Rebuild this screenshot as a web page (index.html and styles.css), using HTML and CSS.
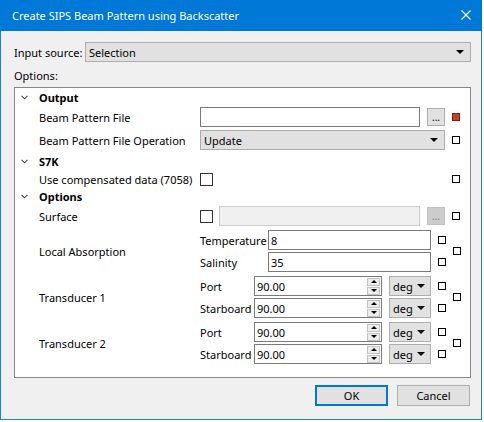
FILE: index.html
```html
<!DOCTYPE html>
<html lang="en">

<head>
    <meta charset="UTF-8">
    <title>Create SIPS Beam Pattern using Backscatter</title>
    <link rel="stylesheet" href="styles.css">
</head>

<body>
    <div class="window">
        <div class="titlebar">
            <span class="title">Create SIPS Beam Pattern using Backscatter</span>
            <svg class="close" width="10" height="10" viewBox="0 0 10 10">
                <path d="M0.5 0.5 L9.5 9.5 M9.5 0.5 L0.5 9.5" stroke="#fff" stroke-width="1.1" fill="none" />
            </svg>
        </div>
        <div class="content">
            <div class="source">
                <span class="source-label">Input source:</span>
                <div class="combo source-combo"><span>Selection</span><i class="arrow"></i></div>
            </div>
            <div class="options-label">Options:</div>

            <div class="tree">
                <div class="section">
                    <svg class="chevron" width="7" height="5" viewBox="0 0 7 5">
                        <path d="M0.5 0.8 L3.5 3.8 L6.5 0.8" stroke="#444" stroke-width="1.1" fill="none" />
                    </svg>
                    <span>Output</span>
                </div>
                <div class="row h22">
                    <div class="label">Beam Pattern File</div>
                    <div class="cell">
                        <div class="edit grow"></div>
                        <div class="browse">...</div>
                    </div>
                    <i class="mark error"></i>
                </div>
                <div class="row h24">
                    <div class="label">Beam Pattern File Operation</div>
                    <div class="cell">
                        <div class="combo grow"><span>Update</span><i class="arrow"></i></div>
                    </div>
                    <i class="mark"></i>
                </div>

                <div class="section">
                    <svg class="chevron" width="7" height="5" viewBox="0 0 7 5">
                        <path d="M0.5 0.8 L3.5 3.8 L6.5 0.8" stroke="#444" stroke-width="1.1" fill="none" />
                    </svg>
                    <span>S7K</span>
                </div>
                <div class="row h18">
                    <div class="label">Use compensated data (7058)</div>
                    <div class="cell">
                        <i class="check"></i>
                    </div>
                    <i class="mark"></i>
                </div>

                <div class="section short">
                    <svg class="chevron" width="7" height="5" viewBox="0 0 7 5">
                        <path d="M0.5 0.8 L3.5 3.8 L6.5 0.8" stroke="#444" stroke-width="1.1" fill="none" />
                    </svg>
                    <span>Options</span>
                </div>
                <div class="row h22">
                    <div class="label">Surface</div>
                    <div class="cell">
                        <i class="check"></i>
                        <div class="edit grow disabled"></div>
                        <div class="browse disabled">...</div>
                    </div>
                    <i class="mark"></i>
                </div>

                <div class="row group">
                    <div class="label">Local Absorption</div>
                    <div class="subrows">
                        <div class="sub">
                            <span class="sublabel wide">Temperature</span>
                            <div class="edit grow">8</div>
                            <i class="mark"></i>
                        </div>
                        <div class="sub">
                            <span class="sublabel wide">Salinity</span>
                            <div class="edit grow">35</div>
                            <i class="mark"></i>
                        </div>
                    </div>
                    <i class="mark"></i>
                </div>

                <div class="row group">
                    <div class="label">Transducer 1</div>
                    <div class="subrows">
                        <div class="sub">
                            <span class="sublabel">Port</span>
                            <div class="edit spinbox grow"><span>90.00</span><span class="spin"><i class="up"></i><i class="down"></i></span></div>
                            <div class="combo unit"><span>deg</span><i class="arrow"></i></div>
                            <i class="mark"></i>
                        </div>
                        <div class="sub">
                            <span class="sublabel">Starboard</span>
                            <div class="edit spinbox grow"><span>90.00</span><span class="spin"><i class="up"></i><i class="down"></i></span></div>
                            <div class="combo unit"><span>deg</span><i class="arrow"></i></div>
                            <i class="mark"></i>
                        </div>
                    </div>
                    <i class="mark"></i>
                </div>

                <div class="row group">
                    <div class="label">Transducer 2</div>
                    <div class="subrows">
                        <div class="sub">
                            <span class="sublabel">Port</span>
                            <div class="edit spinbox grow"><span>90.00</span><span class="spin"><i class="up"></i><i class="down"></i></span></div>
                            <div class="combo unit"><span>deg</span><i class="arrow"></i></div>
                            <i class="mark"></i>
                        </div>
                        <div class="sub">
                            <span class="sublabel">Starboard</span>
                            <div class="edit spinbox grow"><span>90.00</span><span class="spin"><i class="up"></i><i class="down"></i></span></div>
                            <div class="combo unit"><span>deg</span><i class="arrow"></i></div>
                            <i class="mark"></i>
                        </div>
                    </div>
                    <i class="mark"></i>
                </div>
            </div>

            <div class="buttons">
                <button class="btn default">OK</button>
                <button class="btn">Cancel</button>
            </div>
        </div>
    </div>
</body>

</html>
```

FILE: styles.css
```css
body {
    margin: 0;
    padding: 0;
    background-color: #fff;
    font-family: "Noto Sans", "Liberation Sans", sans-serif;
    font-size: 11px;
    color: #000;
}

.window {
    box-sizing: border-box;
    width: 482px;
    height: 420px;
    border: 1px solid #1883d7;
    border-top: none;
    background-color: #f0f0f0;
}

.titlebar {
    display: flex;
    align-items: center;
    justify-content: space-between;
    height: 31px;
    margin: 0 -1px;
    padding: 0 12px 1px 12px;
    box-sizing: border-box;
    background-color: #0078d7;
    font-size: 11px;
    color: #fff;
}

.titlebar .close {
    display: block;
    margin-right: -1px;
}

.content {
    padding: 11px 10px 0 13px;
}

.source {
    display: flex;
    align-items: center;
    height: 20px;
}

.source-label {
    width: 71px;
    white-space: nowrap;
}

.combo {
    display: flex;
    align-items: center;
    justify-content: space-between;
    box-sizing: border-box;
    height: 20px;
    padding: 0 6px 0 3px;
    border: 1px solid #adadad;
    background-color: #e1e1e1;
}

.source-combo {
    flex: 1;
}

.arrow {
    width: 0;
    height: 0;
    border-left: 4px solid transparent;
    border-right: 4px solid transparent;
    border-top: 4px solid #000;
}

.options-label {
    height: 13px;
    margin-top: 7px;
    line-height: 13px;
}

.tree {
    box-sizing: border-box;
    height: 291px;
    margin-top: 5px;
    border: 1px solid #828790;
    background-color: #fff;
}

.section {
    display: flex;
    align-items: center;
    height: 18px;
    font-weight: bold;
}

.section.short {
    height: 17px;
}

.section .chevron {
    display: block;
    margin: 0 11px 0 6px;
}

.row {
    display: flex;
    align-items: center;
}

.h18 {
    height: 18px;
}

.h22 {
    height: 22px;
}

.h24 {
    height: 24px;
}

.row .label {
    box-sizing: border-box;
    width: 185px;
    padding-left: 24px;
    padding-top: 1px;
    white-space: nowrap;
}

.row .cell {
    display: flex;
    align-items: center;
    width: 245px;
    margin-right: 7px;
}

.grow {
    flex: 1;
}

.edit {
    display: flex;
    align-items: center;
    box-sizing: border-box;
    height: 20px;
    padding: 0 2px;
    border: 1px solid #7a7a7a;
    background-color: #fff;
}

.edit.disabled {
    margin: 0 7px 0 6px;
    border-color: #cccccc;
    background-color: #f0f0f0;
}

.browse {
    box-sizing: border-box;
    width: 18px;
    height: 18px;
    margin-left: 7px;
    border: 1px solid #adadad;
    background-color: #e1e1e1;
    font-size: 10px;
    line-height: 17px;
    text-align: center;
    color: #000;
}

.browse.disabled {
    margin-left: 0;
    border-color: #bfbfbf;
    background-color: #cccccc;
    color: #838383;
}

.check {
    box-sizing: border-box;
    width: 13px;
    height: 13px;
    border: 1px solid #333;
    background-color: #fff;
}

.mark {
    box-sizing: border-box;
    width: 8px;
    height: 8px;
    border: 1px solid #000;
    background-color: #fff;
}

.mark.error {
    border-color: #7d1f12;
    background-color: #c1412c;
}

.group {
    padding-top: 2px;
}

.group:first-of-type {
    padding-bottom: 1px;
}

.group .mark:last-child {
    margin: 0 0 0 7px;
}

.subrows {
    width: 246px;
}

.sub {
    display: flex;
    align-items: center;
    height: 22px;
}

.sub .mark {
    margin-left: 6px;
}

.sublabel {
    width: 54px;
}

.sublabel.wide {
    width: 68px;
}

.spinbox {
    justify-content: space-between;
    padding-right: 1px;
}

.spin {
    display: flex;
    flex-direction: column;
    gap: 1px;
}

.spin i {
    box-sizing: border-box;
    display: flex;
    align-items: center;
    justify-content: center;
    width: 13px;
    height: 8px;
    border: 1px solid #c2c2c2;
    background-color: #ececec;
}

.spin i::before {
    content: "";
    width: 0;
    height: 0;
    border-left: 3px solid transparent;
    border-right: 3px solid transparent;
}

.spin .up::before {
    border-bottom: 3px solid #000;
}

.spin .down::before {
    border-top: 3px solid #000;
}

.unit {
    width: 42px;
    margin-left: 7px;
    padding-right: 5px;
}

.unit + .mark {
    margin-left: 7px;
}

.buttons {
    display: flex;
    justify-content: flex-end;
    gap: 9px;
    margin-top: 7px;
    padding-right: 1px;
}

.btn {
    box-sizing: border-box;
    width: 73px;
    height: 21px;
    padding: 0;
    border: 1px solid #adadad;
    outline: none;
    background-color: #e1e1e1;
    font-family: inherit;
    font-size: 11px;
    color: #000;
}

.btn.default {
    border: 2px solid #0078d7;
}
```
